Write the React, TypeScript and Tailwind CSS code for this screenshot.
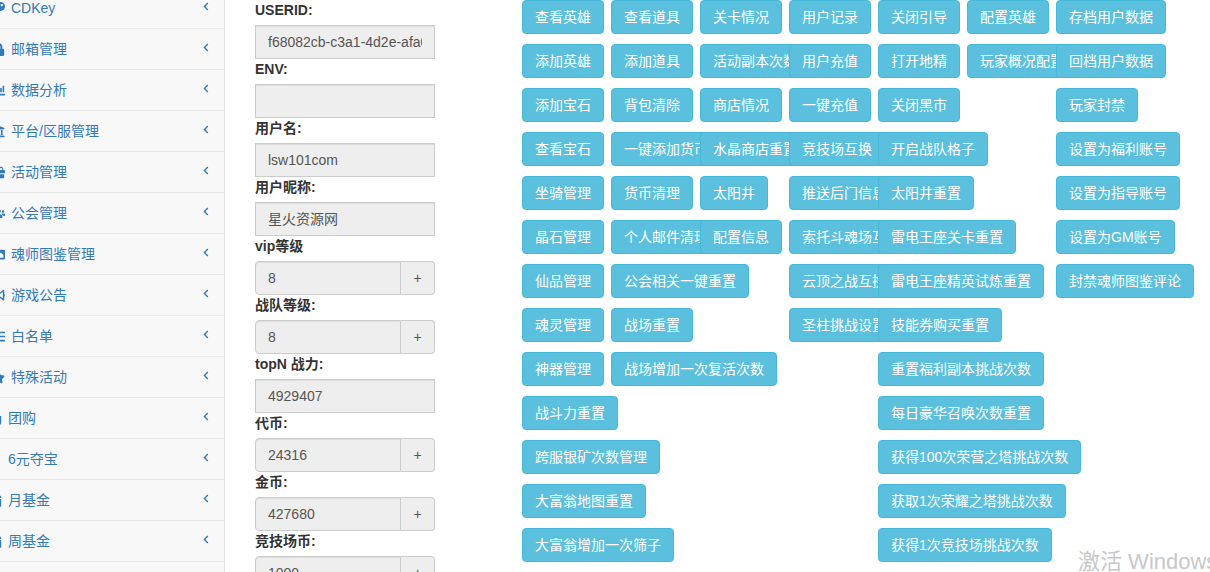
import {
  FaKey,
  FaLock,
  FaChartBar,
  FaUniversity,
  FaGift,
  FaUsers,
  FaImage,
  FaBullhorn,
  FaList,
  FaStar,
  FaShoppingBag,
  FaYenSign,
  FaCalendar,
  FaTag,
} from 'react-icons/fa'
import type { IconType } from 'react-icons'

const FONT = "font-['Liberation_Sans','Noto_Sans_CJK_SC',sans-serif]"

const menu: { label: string; icon: IconType; narrow?: boolean }[] = [
  { label: 'CDKey', icon: FaKey },
  { label: '邮箱管理', icon: FaLock },
  { label: '数据分析', icon: FaChartBar },
  { label: '平台/区服管理', icon: FaUniversity },
  { label: '活动管理', icon: FaGift },
  { label: '公会管理', icon: FaUsers },
  { label: '魂师图鉴管理', icon: FaImage },
  { label: '游戏公告', icon: FaBullhorn },
  { label: '白名单', icon: FaList },
  { label: '特殊活动', icon: FaStar },
  { label: '团购', icon: FaShoppingBag, narrow: true },
  { label: '6元夺宝', icon: FaYenSign, narrow: true },
  { label: '月基金', icon: FaCalendar, narrow: true },
  { label: '周基金', icon: FaCalendar, narrow: true },
  { label: '礼包管理', icon: FaTag, narrow: true },
]

// each column is a fixed 89px track; longer buttons spill over the next one
const columns: string[][] = [
  ['查看英雄', '添加英雄', '添加宝石', '查看宝石', '坐骑管理', '晶石管理', '仙品管理', '魂灵管理', '神器管理', '战斗力重置', '跨服银矿次数管理', '大富翁地图重置', '大富翁增加一次筛子'],
  ['查看道具', '添加道具', '背包清除', '一键添加货币', '货币清理', '个人邮件清理', '公会相关一键重置', '战场重置', '战场增加一次复活次数'],
  ['关卡情况', '活动副本次数', '商店情况', '水晶商店重置', '太阳井', '配置信息'],
  ['用户记录', '用户充值', '一键充值', '竞技场互换', '推送后门信息', '索托斗魂场互换', '云顶之战互换', '圣柱挑战设置'],
  ['关闭引导', '打开地精', '关闭黑市', '开启战队格子', '太阳井重置', '雷电王座关卡重置', '雷电王座精英试炼重置', '技能券购买重置', '重置福利副本挑战次数', '每日豪华召唤次数重置', '获得100次荣营之塔挑战次数', '获取1次荣耀之塔挑战次数', '获得1次竞技场挑战次数'],
  ['配置英雄', '玩家概况配置'],
  ['存档用户数据', '回档用户数据', '玩家封禁', '设置为福利账号', '设置为指导账号', '设置为GM账号', '封禁魂师图鉴评论'],
]

const fields: { label: string; value: string; plus?: boolean }[] = [
  { label: 'USERID:', value: 'f68082cb-c3a1-4d2e-afa0-1b2c' },
  { label: 'ENV:', value: '' },
  { label: '用户名:', value: 'lsw101com' },
  { label: '用户昵称:', value: '星火资源网' },
  { label: 'vip等级', value: '8', plus: true },
  { label: '战队等级:', value: '8', plus: true },
  { label: 'topN 战力:', value: '4929407' },
  { label: '代币:', value: '24316', plus: true },
  { label: '金币:', value: '427680', plus: true },
  { label: '竞技场币:', value: '1000', plus: true },
]

function Chevron() {
  return (
    <svg width="6" height="9" viewBox="0 0 6 9" className="mb-[3px] ml-auto mr-[15px] shrink-0">
      <path d="M4.8 1 1.4 4.5l3.4 3.5" fill="none" stroke="#337ab7" strokeWidth="1.4" />
    </svg>
  )
}

function Sidebar() {
  return (
    <aside className="h-full w-[225px] shrink-0 overflow-hidden border-r border-[#e7e7e7] bg-[#f8f8f8]">
      <ul className="-mt-[12px]">
        {menu.map(({ label, icon: Icon, narrow }) => (
          <li key={label} className="flex h-[41px] items-center border-b border-[#e7e7e7] text-[14px] text-[#337ab7]">
            <Icon className={`shrink-0 text-[13px] ${narrow ? '-ml-[11px] mr-[6px]' : '-ml-[8px] mr-[6px]'}`} />
            <span className="leading-5">{label}</span>
            <Chevron />
          </li>
        ))}
      </ul>
    </aside>
  )
}

function Field({ label, value, plus }: { label: string; value: string; plus?: boolean }) {
  return (
    <div>
      <label className="mb-[5px] block text-[14px] font-bold leading-5 text-[#333]">{label}</label>
      <div className="flex h-[34px]">
        <div
          className={`flex min-w-0 flex-1 items-center border border-[#ccc] bg-[#eee] px-3 text-[14px] text-[#555] shadow-[inset_0_1px_1px_rgba(0,0,0,0.075)] ${plus ? 'rounded-l-[4px]' : ''}`}
        >
          <span className="min-w-0 flex-1 overflow-hidden whitespace-nowrap">{value}</span>
        </div>
        {plus && (
          <span className="flex w-[34px] items-center justify-center rounded-r-[4px] border border-l-0 border-[#ccc] bg-[#eee] text-[14px] text-[#555]">
            +
          </span>
        )}
      </div>
    </div>
  )
}

export default function App() {
  return (
    <div className={`relative flex h-[572px] w-[1210px] overflow-hidden bg-white ${FONT}`}>
      <Sidebar />

      <div className="ml-[30px] w-[180px] shrink-0">
        {fields.map((f) => (
          <Field key={f.label} {...f} />
        ))}
      </div>

      <div className="ml-[87px] flex items-start">
        {columns.map((col, i) => (
          <div key={i} className="flex w-[89px] shrink-0 flex-col items-start gap-[10px]">
            {col.map((b) => (
              <button
                key={b}
                type="button"
                className="h-[34px] whitespace-nowrap rounded-[4px] border border-[#46b8da] bg-[#5bc0de] px-3 text-[14px] leading-5 text-white"
              >
                {b}
              </button>
            ))}
          </div>
        ))}
      </div>

      <div className="pointer-events-none absolute left-[1078px] top-[547px] whitespace-nowrap text-[22px] leading-[30px] text-[#c8c8c8]">
        激活 Windows
      </div>
    </div>
  )
}
